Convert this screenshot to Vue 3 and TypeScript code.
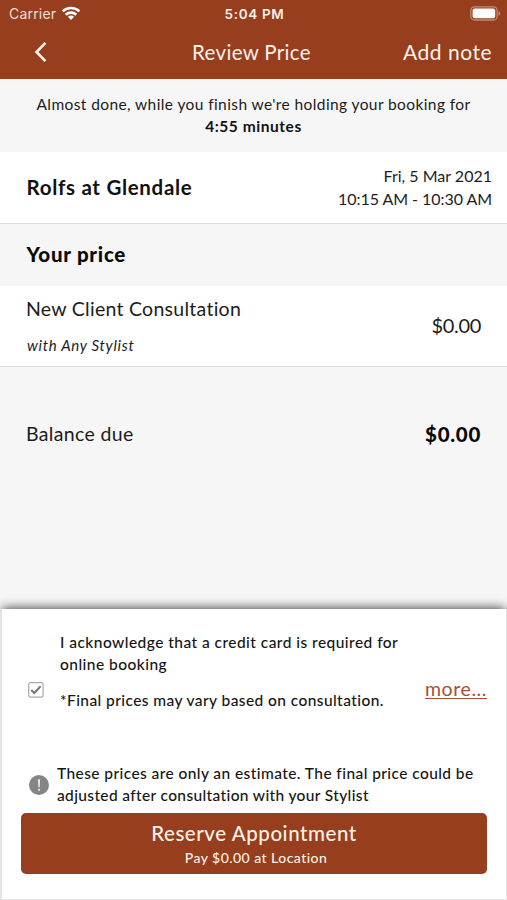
<script setup lang="ts">
import { ref } from 'vue'

const holdTime = '4:55 minutes'
const salon = 'Rolfs at Glendale'
const service = { name: 'New Client Consultation', stylist: 'with Any Stylist', price: '$0.00' }
const balance = '$0.00'
const acknowledged = ref(true)
</script>

<template>
  <main class="screen">
    <header class="header">
      <div class="status">
        <div class="carrier">
          <span>Carrier</span>
          <svg class="wifi" viewBox="0 0 20 15" width="20" height="15">
            <path d="M1.6 5.4 C6.3 0.9 13.7 0.9 18.4 5.4" />
            <path d="M4.7 8.7 C7.7 5.9 12.3 5.9 15.3 8.7" />
            <path class="dot" d="M6.9 10.8 Q10 8.4 13.1 10.8 L10 14 Z" />
          </svg>
        </div>
        <span class="clock">5:04 PM</span>
        <svg class="battery" viewBox="0 0 31 15" width="31" height="15">
          <rect class="shell" x="0.8" y="0.8" width="26.4" height="13.2" rx="3.8" />
          <rect class="charge" x="2.6" y="2.5" width="22.6" height="9.8" rx="2" />
          <path class="cap" d="M28.6 5 Q30.3 5.8 30.3 7.4 T28.6 9.8 Z" />
        </svg>
      </div>
      <nav class="nav">
        <button class="back" aria-label="Back">
          <svg viewBox="0 0 14 22" width="14" height="22"><path d="M12.4 1.8 L3.5 11 L12.4 20.2" /></svg>
        </button>
        <h1 class="title">Review Price</h1>
        <button class="note">Add note</button>
      </nav>
    </header>

    <section class="notice">
      <p class="notice-text">Almost done, while you finish we're holding your booking for</p>
      <strong class="hold">{{ holdTime }}</strong>
    </section>

    <section class="booking">
      <h2 class="salon">{{ salon }}</h2>
      <div class="when">
        <p class="date">Fri, 5 Mar 2021</p>
        <p class="hours">10:15 AM - 10:30 AM</p>
      </div>
    </section>

    <h2 class="section-title">Your price</h2>

    <section class="service">
      <div>
        <p class="service-name">{{ service.name }}</p>
        <p class="stylist">{{ service.stylist }}</p>
      </div>
      <span class="price">{{ service.price }}</span>
    </section>

    <section class="balance">
      <span class="balance-label">Balance due</span>
      <strong class="balance-amount">{{ balance }}</strong>
    </section>

    <footer class="sheet">
      <div class="consent">
        <button class="check" role="checkbox" :aria-checked="acknowledged" @click="acknowledged = !acknowledged">
          <svg viewBox="0 0 16 16" width="16" height="16">
            <rect x="0.7" y="0.7" width="14.4" height="14.4" rx="2" />
            <path v-if="acknowledged" d="M3.2 8 L6.3 11 L12.6 4.2" />
          </svg>
        </button>
        <div class="consent-text">
          <p>I acknowledge that a credit card is required for<br />online booking</p>
          <p class="vary">*Final prices may vary based on consultation.</p>
        </div>
        <a class="more">more...</a>
      </div>
      <div class="estimate">
        <svg class="alert" viewBox="0 0 20 20" width="20" height="20">
          <circle cx="10" cy="10" r="10" />
          <path d="M8.9 4.2 H11.1 L10.7 12.3 H9.3 Z" />
          <rect x="9" y="13.8" width="2" height="2" rx="0.5" />
        </svg>
        <p class="estimate-text">These prices are only an estimate. The final price could be<br /><span class="second">adjusted after consultation with your Stylist</span></p>
      </div>
      <button class="reserve">
        <span class="reserve-label">Reserve Appointment</span>
        <span class="reserve-pay">Pay $0.00 at Location</span>
      </button>
    </footer>
  </main>
</template>

<style>
body {
  margin: 0;
}
</style>

<style scoped>
* {
  box-sizing: border-box;
}
p,
h1,
h2 {
  margin: 0;
}
button {
  border: 0;
  padding: 0;
  background: none;
  font: inherit;
  color: inherit;
}
svg {
  display: block;
}
.screen {
  display: flex;
  flex-direction: column;
  width: 507px;
  height: 900px;
  overflow: hidden;
  background: #f6f6f6;
  color: #1c1c1c;
  font-family: Lato, 'Liberation Sans', sans-serif;
  white-space: nowrap;
}
.header {
  height: 79px;
  background: #963e1e;
  color: #fff1e9;
}
.status {
  display: grid;
  grid-template-columns: 1fr auto 1fr;
  align-items: center;
  height: 27px;
  padding: 0 7px 0 9px;
  font-family: Inter, 'Liberation Sans', sans-serif;
}
.carrier {
  display: flex;
  align-items: center;
  gap: 5px;
  font-size: 14px;
  letter-spacing: 0.2px;
  color: #f6dfd5;
}
.wifi path {
  fill: none;
  stroke: #fff;
  stroke-width: 2.6;
}
.wifi .dot {
  fill: #fff;
  stroke: none;
}
.clock {
  font-size: 13.5px;
  font-weight: 600;
  letter-spacing: 0.65px;
}
.battery {
  justify-self: end;
  margin-right: -1px;
}
.shell {
  fill: none;
  stroke: #c58a73;
  stroke-width: 1.3;
}
.charge {
  fill: #fff;
}
.cap {
  fill: #c58a73;
}
.nav {
  display: grid;
  grid-template-columns: 1fr auto 1fr;
  align-items: center;
  height: 50px;
  padding: 0 15px 0 33px;
}
.back path {
  fill: none;
  stroke: #fff1e9;
  stroke-width: 2.6;
}
.title {
  margin: 0 22px 1px 0;
  font-size: 20.5px;
  font-weight: 400;
  letter-spacing: 0.33px;
}
.note {
  justify-self: end;
  margin-bottom: 2px;
  font-size: 21px;
  letter-spacing: 0.5px;
}
.notice {
  height: 73px;
  padding-top: 13px;
  border-top: 1px solid #fbf1e9;
  text-align: center;
  font-size: 15.5px;
  line-height: 22px;
}
.notice-text {
  letter-spacing: 0.4px;
}
.hold {
  display: block;
  color: #111;
  letter-spacing: 0.55px;
}
.booking {
  display: flex;
  align-items: center;
  justify-content: space-between;
  height: 72px;
  padding: 0 15px 2px 26.5px;
  border-bottom: 1px solid #dcdcdc;
  background: #fff;
}
.salon {
  font-size: 20.5px;
  font-weight: 700;
  letter-spacing: 0.7px;
  color: #111;
}
.when {
  font-size: 16px;
  line-height: 23px;
  text-align: right;
}
.hours {
  letter-spacing: -0.05px;
}
.section-title {
  height: 62px;
  padding-left: 26.5px;
  font-size: 20.5px;
  font-weight: 900;
  line-height: 60px;
  letter-spacing: 0.73px;
  color: #0a0a0a;
}
.service {
  display: flex;
  align-items: center;
  justify-content: space-between;
  height: 81px;
  padding: 0 26px 2px;
  border-bottom: 1px solid #dcdcdc;
  background: #fff;
}
.service-name {
  font-size: 19.5px;
  line-height: 40px;
  letter-spacing: 0.27px;
}
.stylist {
  padding-left: 1px;
  font-size: 15px;
  font-style: italic;
  line-height: 32px;
  letter-spacing: 0.7px;
}
.price {
  font-size: 20px;
  letter-spacing: -0.3px;
}
.balance {
  display: flex;
  align-items: center;
  justify-content: space-between;
  flex: 1;
  padding: 0 26px 109px 26px;
}
.balance-label {
  font-size: 19.5px;
  letter-spacing: 0.34px;
}
.balance-amount {
  font-size: 20.5px;
  font-weight: 900;
  letter-spacing: 0.7px;
  color: #0a0a0a;
}
.sheet {
  display: flex;
  flex-direction: column;
  height: 291px;
  padding: 20px 19px 25px;
  border: solid #e4e4e4;
  border-width: 0 1px 1px 2px;
  background: #fff;
  box-shadow: 0 -3px 10px -2px #444;
  font-size: 15.5px;
  font-weight: 500;
  line-height: 22px;
  color: #151515;
}
.consent {
  display: flex;
  align-items: center;
  height: 122px;
}
.check {
  flex: none;
  margin: 0 16px 0 7px;
}
.check rect {
  fill: #fff;
  stroke: #aaa;
  stroke-width: 1.2;
}
.check path {
  fill: none;
  stroke: #777;
  stroke-width: 2;
}
.consent-text {
  flex: 1;
  align-self: flex-start;
  padding-top: 2px;
  letter-spacing: 0.46px;
}
.vary {
  margin-top: 14px;
  letter-spacing: 0.42px;
}
.more {
  margin-bottom: 2px;
  font-size: 19.5px;
  font-weight: 400;
  letter-spacing: 0.6px;
  color: #a9502f;
  text-decoration: underline;
  text-decoration-thickness: 1px;
  text-underline-offset: 2px;
}
.estimate {
  display: flex;
  align-items: center;
  gap: 8px;
  margin: auto 0 7px 8px;
}
.alert {
  margin-top: 1px;
}
.alert circle {
  fill: #858585;
}
.alert path,
.alert rect {
  fill: #e8e8e8;
}
.estimate-text {
  letter-spacing: 0.42px;
}
.second {
  letter-spacing: 0.36px;
}
.reserve {
  display: flex;
  flex: none;
  flex-direction: column;
  align-items: center;
  justify-content: center;
  height: 61px;
  padding-top: 2px;
  border-radius: 5px;
  background: #963e1e;
  color: #fff1e9;
}
.reserve-label {
  font-size: 20.5px;
  line-height: 26px;
  letter-spacing: 0.56px;
}
.reserve-pay {
  padding-left: 4px;
  font-size: 14px;
  line-height: 23px;
  letter-spacing: 0.46px;
}
</style>
